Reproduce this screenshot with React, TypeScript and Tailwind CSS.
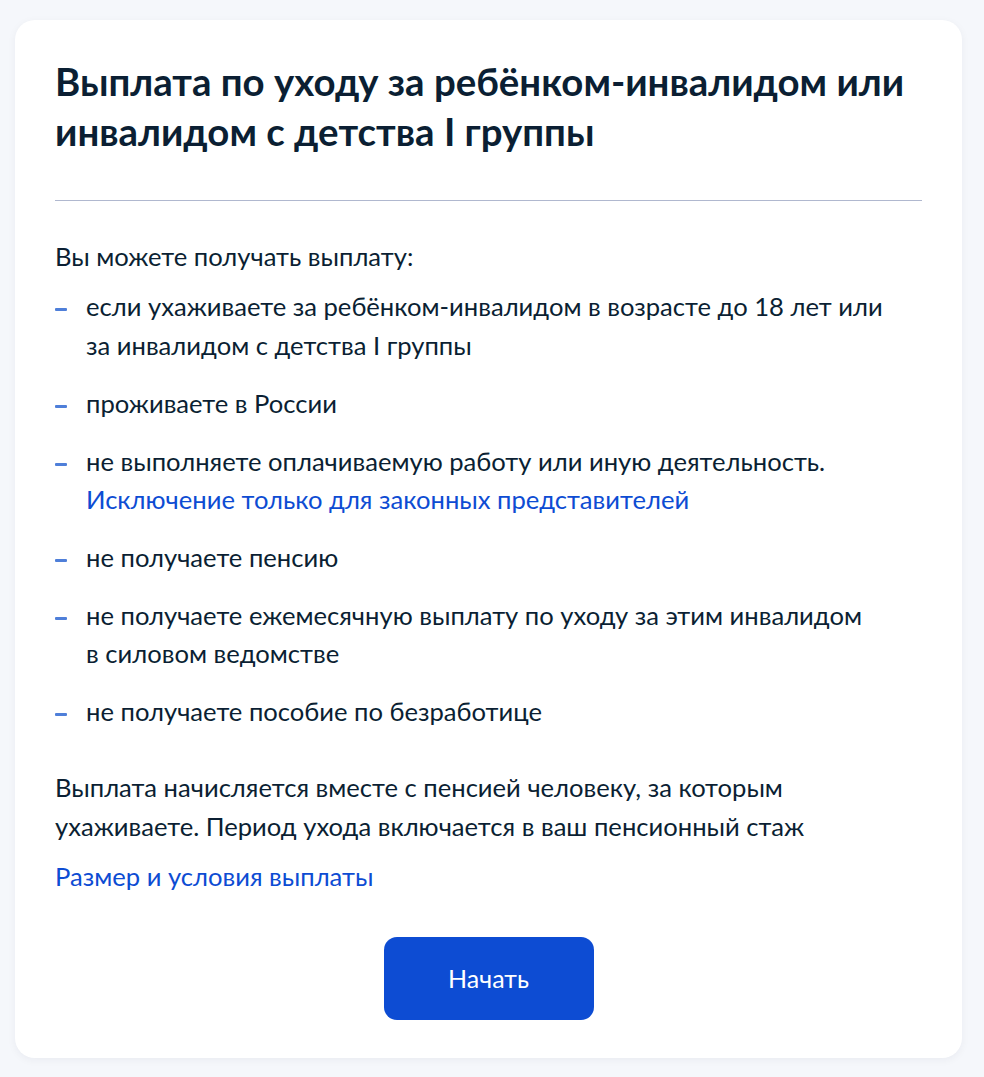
import React from "react";

const items: React.ReactNode[] = [
  <>если ухаживаете за ребёнком-инвалидом в возрасте до 18 лет или<br />за инвалидом с детства I группы</>,
  <>проживаете в России</>,
  <>
    не выполняете оплачиваемую работу или иную деятельность.
    <br />
    <a className="text-[#0d4cd3]" href="#">Исключение только для законных представителей</a>
  </>,
  <>не получаете пенсию</>,
  <>не получаете ежемесячную выплату по уходу за этим инвалидом<br />в силовом ведомстве</>,
  <>не получаете пособие по безработице</>,
];

export default function App() {
  return (
    <div
      className="min-h-[1077px] w-[984px] bg-[#f5f7fb] pt-[20px] pl-[15px] pr-[22px] pb-[20px]"
      style={{ fontFamily: "Lato, 'Noto Sans', sans-serif" }}
    >
      <div className="rounded-[20px] bg-white px-[40px] pt-[36px] pb-[38px] text-[#0b1f33] shadow-[0_2px_8px_rgba(0,20,60,0.05)]">
        <h1 className="text-[38.4px] font-bold leading-[50px] text-[#0b1f33]">
          Выплата по уходу за ребёнком-инвалидом или инвалидом с детства I группы
        </h1>
        <div className="mt-[44px] h-px bg-[#b0b8cf]" />
        <p className="mt-[36px] text-[25.6px] leading-[38.4px]">Вы можете получать выплату:</p>
        <ul className="mt-[12px] flex flex-col gap-[19.5px]">
          {items.map((it, i) => (
            <li key={i} className="flex text-[25.6px] leading-[38.4px]">
              <span className="mt-[21px] mr-[19px] h-[3px] w-[12px] shrink-0 rounded-[1px] bg-[#4f7fd9]" />
              <span>{it}</span>
            </li>
          ))}
        </ul>
        <p className="mt-[37px] text-[25.6px] leading-[39px]">
          Выплата начисляется вместе с пенсией человеку, за которым
          <br />
          ухаживаете. Период ухода включается в ваш пенсионный стаж
        </p>
        <a href="#" className="mt-[11px] block text-[25.6px] leading-[38.4px] text-[#0d4cd3]">
          Размер и условия выплаты
        </a>
        <div className="mt-[42px] flex justify-center">
          <button className="h-[83px] w-[210px] rounded-[13px] bg-[#0d4cd3] text-[25px] text-white">
            Начать
          </button>
        </div>
      </div>
    </div>
  );
}
